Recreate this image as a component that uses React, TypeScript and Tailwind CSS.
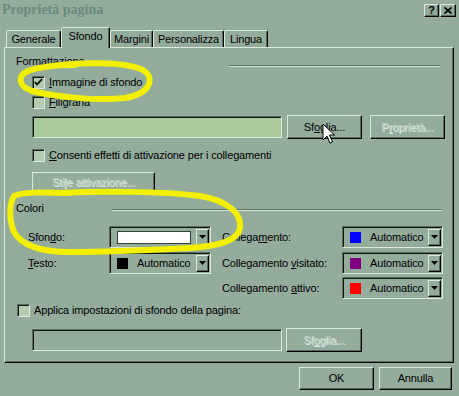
import React from "react";

const BG = "bg-[#93ac9c]";
const raised =
  "border border-t-[#dbe8dc] border-l-[#dbe8dc] border-b-black border-r-black shadow-[inset_-1px_-1px_0_#586c60]";
const sunken =
  "border border-t-[#586c60] border-l-[#586c60] border-b-[#dbe8dc] border-r-[#dbe8dc] shadow-[inset_1px_1px_0_#101810]";
const disabledText = "text-[#bfd2c3] [text-shadow:1px_1px_0_#dde9de]";

function Etched({ w, className = "" }: { w: string; className?: string }) {
  return (
    <div className={`${w} ${className} h-[2px] border-t border-t-[#5f7367] border-b border-b-[#d3e2d5]`} />
  );
}

function Check({ checked = false }: { checked?: boolean }) {
  return (
    <div className={`w-[13px] h-[13px] shrink-0 bg-[#b3cbb1] ${sunken} flex items-center justify-center`}>
      {checked && (
        <svg width="9" height="9" viewBox="0 0 9 9">
          <path d="M1 4 L3 6.5 L8 1.2" stroke="black" strokeWidth="1.8" fill="none" />
        </svg>
      )}
    </div>
  );
}

function Btn({
  children,
  w,
  h = "h-[23px]",
  disabled = false,
}: {
  children: React.ReactNode;
  w: string;
  h?: string;
  disabled?: boolean;
}) {
  return (
    <div className={`${w} ${h} shrink-0 ${raised} flex items-center justify-center ${disabled ? disabledText : ""}`}>
      {children}
    </div>
  );
}

function Arrow() {
  return (
    <div className={`w-[13px] h-[17px] ${raised} flex items-center justify-center shrink-0`}>
      <svg width="7" height="4" viewBox="0 0 7 4">
        <path d="M0 0 H7 L3.5 4 Z" fill="black" />
      </svg>
    </div>
  );
}

function Combo({ w, swatch, white = false }: { w: string; swatch?: string; white?: boolean }) {
  return (
    <div className={`${w} h-[22px] shrink-0 ${sunken} flex items-center pl-[7px] pr-[1px]`}>
      {white ? (
        <div className="w-[74px] h-[13px] bg-white border border-[#34443a]" />
      ) : (
        <>
          <div className="w-[11px] h-[11px]" style={{ backgroundColor: swatch }} />
          <span className="ml-[9px]">Automatico</span>
        </>
      )}
      <div className="ml-auto">
        <Arrow />
      </div>
    </div>
  );
}

function Tab({ label, w, selected = false }: { label: string; w: string; selected?: boolean }) {
  if (selected) {
    return (
      <div
        className={`${w} h-[21px] -mb-[1px] relative z-10 ${BG} border-t border-l border-t-[#dbe8dc] border-l-[#dbe8dc] border-r border-r-black shadow-[inset_-1px_0_0_#586c60] rounded-t-[2px] flex items-start justify-center pt-[2px]`}
      >
        {label}
      </div>
    );
  }
  return (
    <div
      className={`${w} h-[17px] border-t border-l border-t-[#dbe8dc] border-l-[#dbe8dc] border-r border-r-black shadow-[inset_-1px_0_0_#586c60] rounded-t-[2px] flex items-start justify-center pt-[2px]`}
    >
      {label}
    </div>
  );
}

export default function App() {
  return (
    <div
      className={`w-[459px] h-[396px] ${BG} relative overflow-hidden font-['Liberation_Sans',Arial,sans-serif] text-[11px] leading-[13px] tracking-[-0.15px] text-black flex flex-col`}
    >
      {/* Title bar */}
      <div className="h-[27px] flex items-start justify-between shrink-0">
        <div className="ml-[2px] mt-[2px] font-['Liberation_Serif',serif] font-bold text-[14px] leading-[16px] tracking-normal text-[#6a8b7c]">
          Proprietà pagina
        </div>
        <div className="flex mt-[4px] mr-[3px] gap-[1px]">
          <div className={`w-[15px] h-[13px] ${raised} flex items-center justify-center font-bold text-[11px] leading-none`}>?</div>
          <div className={`w-[16px] h-[13px] ${raised} flex items-center justify-center`}>
            <svg width="8" height="7" viewBox="0 0 8 7">
              <path d="M0.5 0.5 L7.5 6.5 M7.5 0.5 L0.5 6.5" stroke="black" strokeWidth="1.8" />
            </svg>
          </div>
        </div>
      </div>

      {/* Tabs */}
      <div className="flex items-end h-[20px] pl-[6px] shrink-0">
        <Tab label="Generale" w="w-[55px]" />
        <Tab label="Sfondo" w="w-[49px]" selected />
        <Tab label="Margini" w="w-[43px]" />
        <Tab label="Personalizza" w="w-[71px]" />
        <Tab label="Lingua" w="w-[44px]" />
      </div>

      {/* Panel */}
      <div
        className={`ml-[4px] w-[450px] h-[316px] shrink-0 border border-t-[#dbe8dc] border-l-[#dbe8dc] border-b-black border-r-black shadow-[inset_-1px_-1px_0_#586c60] flex flex-col`}
      >
        {/* Formattazione */}
        <div className="flex h-[13px] mt-[7px]">
          <span className="ml-[11px] w-[213px]">Formattazione</span>
          <Etched w="w-[211px]" className="mt-[10px]" />
        </div>

        <div className="flex items-center h-[13px] mt-[8px] ml-[27px]">
          <Check checked />
          <span className="ml-[4px]">
            <u>I</u>mmagine di sfondo
          </span>
        </div>

        <div className="flex items-center h-[13px] mt-[7px] ml-[27px]">
          <Check />
          <span className="ml-[4px]">
            <u>F</u>iligrana
          </span>
        </div>

        <div className="flex items-center h-[24px] mt-[6px] ml-[27px]">
          <div className={`w-[250px] h-[22px] bg-[#abcb9d] ${sunken}`} />
          <div className="ml-[5px]">
            <Btn w="w-[75px]" h="h-[24px]">
              Sf<u>o</u>glia...
            </Btn>
          </div>
          <div className="ml-[8px]">
            <Btn w="w-[75px]" h="h-[24px]" disabled>
              P<u>r</u>oprietà...
            </Btn>
          </div>
        </div>

        <div className="flex items-center h-[13px] mt-[10px] ml-[27px]">
          <Check />
          <span className="ml-[4px]">
            <u>C</u>onsenti effetti di attivazione per i collegamenti
          </span>
        </div>

        <div className="mt-[10px] ml-[27px]">
          <Btn w="w-[123px]" h="h-[20px]" disabled>
            Sti<u>l</u>e attivazione...
          </Btn>
        </div>

        {/* Colori */}
        <div className="flex h-[13px] mt-[10px]">
          <span className="ml-[11px] w-[96px]">Colori</span>
          <Etched w="w-[330px]" className="mt-[7px]" />
        </div>

        <div className="flex mt-[11px]">
          <div className="flex flex-col gap-[4px] ml-[23px]">
            <div className="flex items-center h-[22px]">
              <span className="w-[81px]">
                Sfon<u>d</u>o:
              </span>
              <Combo w="w-[102px]" white />
            </div>
            <div className="flex items-center h-[22px]">
              <span className="w-[81px]">
                <u>T</u>esto:
              </span>
              <Combo w="w-[102px]" swatch="#000000" />
            </div>
          </div>
          <div className="flex flex-col gap-[4px] ml-[11px]">
            <div className="flex items-center h-[22px]">
              <span className="w-[120px]">
                Collega<u>m</u>ento:
              </span>
              <Combo w="w-[101px]" swatch="#0000ff" />
            </div>
            <div className="flex items-center h-[22px]">
              <span className="w-[120px]">
                Collegamento <u>v</u>isitato:
              </span>
              <Combo w="w-[101px]" swatch="#800080" />
            </div>
            <div className="flex items-center h-[22px] -mt-[1px]">
              <span className="w-[120px]">
                Collegamento <u>a</u>ttivo:
              </span>
              <Combo w="w-[101px]" swatch="#ff0000" />
            </div>
          </div>
        </div>

        <div className="flex items-center h-[13px] mt-[5px] ml-[12px]">
          <Check />
          <span className="ml-[4px]">Applica impostazioni di sfondo della pagina:</span>
        </div>

        <div className="flex items-center h-[24px] mt-[11px] ml-[27px]">
          <div className={`w-[250px] h-[22px] ${sunken}`} />
          <div className="ml-[4px]">
            <Btn w="w-[76px]" h="h-[24px]" disabled>
              Sf<u>o</u>glia...
            </Btn>
          </div>
        </div>
      </div>

      {/* Bottom buttons */}
      <div className="flex mt-[4px] ml-[299px] gap-[5px]">
        <Btn w="w-[75px]">OK</Btn>
        <Btn w="w-[73px]">Annulla</Btn>
      </div>

      {/* Yellow marker annotations and cursor overlay */}
      <svg
        className="absolute left-0 top-0 pointer-events-none"
        width="459"
        height="396"
        viewBox="0 0 459 396"
      >
        <path
          d="M45 67 C75 62 125 61 143 70 C156 78 150 94 125 98 C98 101 55 97 32 91 C18 86 17 76 28 71 C42 66 60 65 75 65"
          stroke="#f2f000"
          strokeWidth="6"
          fill="none"
          strokeLinecap="round"
        />
        <path
          d="M60 193 C100 191 160 191 200 196 C225 200 242 212 240 228 C238 240 222 246 190 248 C150 250 110 252 70 252 C40 252 22 246 14 232 C9 220 9 204 14 196 C22 192 40 192 70 193"
          stroke="#f2f000"
          strokeWidth="6"
          fill="none"
          strokeLinecap="round"
        />
        <path
          d="M323 124 L323 140 L327 136 L330 143 L332.5 142 L329.5 135 L334.5 135 Z"
          fill="white"
          stroke="black"
          strokeWidth="1"
          strokeLinejoin="miter"
        />
      </svg>
    </div>
  );
}
